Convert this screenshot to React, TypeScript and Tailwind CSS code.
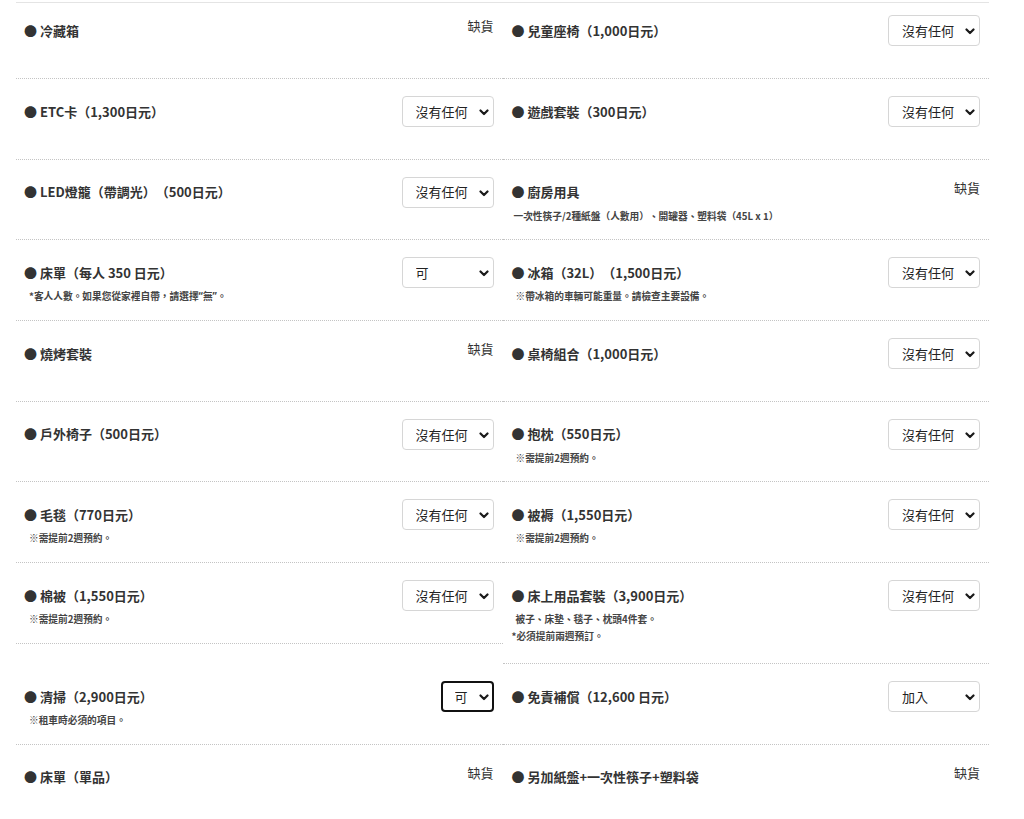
import type { ReactNode } from "react";

type Item = {
  title: string;
  value?: string;
  soldOut?: boolean;
  focused?: boolean;
  tall?: boolean;
  notes?: { text: ReactNode; indent: string }[];
};

const q = (s: string) => <span style={{ fontFamily: '"Noto Sans", sans-serif' }}>{s}</span>;

const rows: [Item, Item][] = [
  [
    { title: "冷藏箱", soldOut: true },
    { title: "兒童座椅（1,000日元）", value: "沒有任何" },
  ],
  [
    { title: "ETC卡（1,300日元）", value: "沒有任何" },
    { title: "遊戲套裝（300日元）", value: "沒有任何" },
  ],
  [
    { title: "LED燈籠（帶調光）（500日元）", value: "沒有任何" },
    {
      title: "廚房用具",
      soldOut: true,
      notes: [{ text: "一次性筷子/2種紙盤（人數用）、開罐器、塑料袋（45L x 1）", indent: "pl-[2px]" }],
    },
  ],
  [
    {
      title: "床單（每人 350 日元）",
      value: "可",
      notes: [
        {
          text: (
            <>
              *客人人數。如果您從家裡自帶，請選擇{q("“")}無{q("”")}。
            </>
          ),
          indent: "pl-[5px]",
        },
      ],
    },
    {
      title: "冰箱（32L）（1,500日元）",
      value: "沒有任何",
      notes: [{ text: "※帶冰箱的車輛可能重量。請檢查主要設備。", indent: "pl-[4px]" }],
    },
  ],
  [
    { title: "燒烤套裝", soldOut: true },
    { title: "桌椅組合（1,000日元）", value: "沒有任何" },
  ],
  [
    { title: "戶外椅子（500日元）", value: "沒有任何" },
    {
      title: "抱枕（550日元）",
      value: "沒有任何",
      notes: [{ text: "※需提前2週預約。", indent: "pl-[4px]" }],
    },
  ],
  [
    {
      title: "毛毯（770日元）",
      value: "沒有任何",
      notes: [{ text: "※需提前2週預約。", indent: "pl-[5px]" }],
    },
    {
      title: "被褥（1,550日元）",
      value: "沒有任何",
      notes: [{ text: "※需提前2週預約。", indent: "pl-[4px]" }],
    },
  ],
  [
    {
      title: "棉被（1,550日元）",
      value: "沒有任何",
      notes: [{ text: "※需提前2週預約。", indent: "pl-[5px]" }],
    },
    {
      title: "床上用品套裝（3,900日元）",
      value: "沒有任何",
      tall: true,
      notes: [
        { text: "被子、床墊、毯子、枕頭4件套。", indent: "pl-[4px]" },
        { text: "*必須提前兩週預訂。", indent: "pl-0" },
      ],
    },
  ],
  [
    {
      title: "清掃（2,900日元）",
      value: "可",
      focused: true,
      notes: [{ text: "※租車時必須的項目。", indent: "pl-[5px]" }],
    },
    { title: "免責補償（12,600 日元）", value: "加入" },
  ],
  [
    { title: "床單（單品）", soldOut: true },
    { title: "另加紙盤+一次性筷子+塑料袋", soldOut: true },
  ],
];

const Select = ({ value, focused }: { value: string; focused?: boolean }) => (
  <div className="relative">
    <select
      defaultValue={value}
      className={`appearance-none h-[31px] rounded-[4px] bg-white text-[13px] text-[#222] outline-none ${
        focused
          ? "w-[53px] border-2 border-[#111] pl-[12px]"
          : "w-[92px] border border-[#d6d6d6] pl-[13px]"
      }`}
    >
      <option>{value}</option>
    </select>
    <svg
      className="absolute right-[5px] top-[13px] pointer-events-none"
      width="10"
      height="7"
      viewBox="0 0 10 7"
      fill="none"
    >
      <path d="M1.5 1.5 L5 5 L8.5 1.5" stroke="#1a1a1a" strokeWidth="2.2" strokeLinecap="round" strokeLinejoin="round" />
    </svg>
  </div>
);

const Cell = ({ item, first, side }: { item: Item; first: boolean; side: "l" | "r" }) => (
  <div
    className={`border-b border-dotted border-[#c4c4c4] pr-[9px] ${side === "l" ? "pl-2" : "pl-[9px]"} ${
      first ? "min-h-[76px] pt-[12px]" : "min-h-[80.7px] pt-[17px]"
    } ${item.tall ? "pb-[18px]" : "pb-[12px]"}`}
  >
    <div className="flex justify-between items-start h-[31px]">
      <div className="self-center text-[13px] font-bold text-[#333] leading-[20px] whitespace-nowrap">
        ● {item.title}
      </div>
      {item.soldOut ? (
        <div className="text-[13px] text-[#333] leading-[21px]">缺貨</div>
      ) : (
        <Select value={item.value!} focused={item.focused} />
      )}
    </div>
    {item.notes?.map((n, i) => (
      <div key={i} className={`text-[9.7px] font-bold text-[#444] leading-[17px] ${n.indent}`}>
        {n.text}
      </div>
    ))}
  </div>
);

export default function App() {
  return (
    <div
      className="min-h-screen bg-white [text-spacing-trim:space-all]"
      style={{ fontFamily: '"Noto Sans CJK TC", "Noto Sans", sans-serif' }}
    >
      <div className="ml-4 mt-[2px] w-[973px] border-t border-[#e4e4e4] grid grid-cols-2 items-start">
        {rows.map(([l, r], i) => [
          <Cell key={`l${i}`} item={l} first={i === 0} side="l" />,
          <Cell key={`r${i}`} item={r} first={i === 0} side="r" />,
        ])}
      </div>
    </div>
  );
}
